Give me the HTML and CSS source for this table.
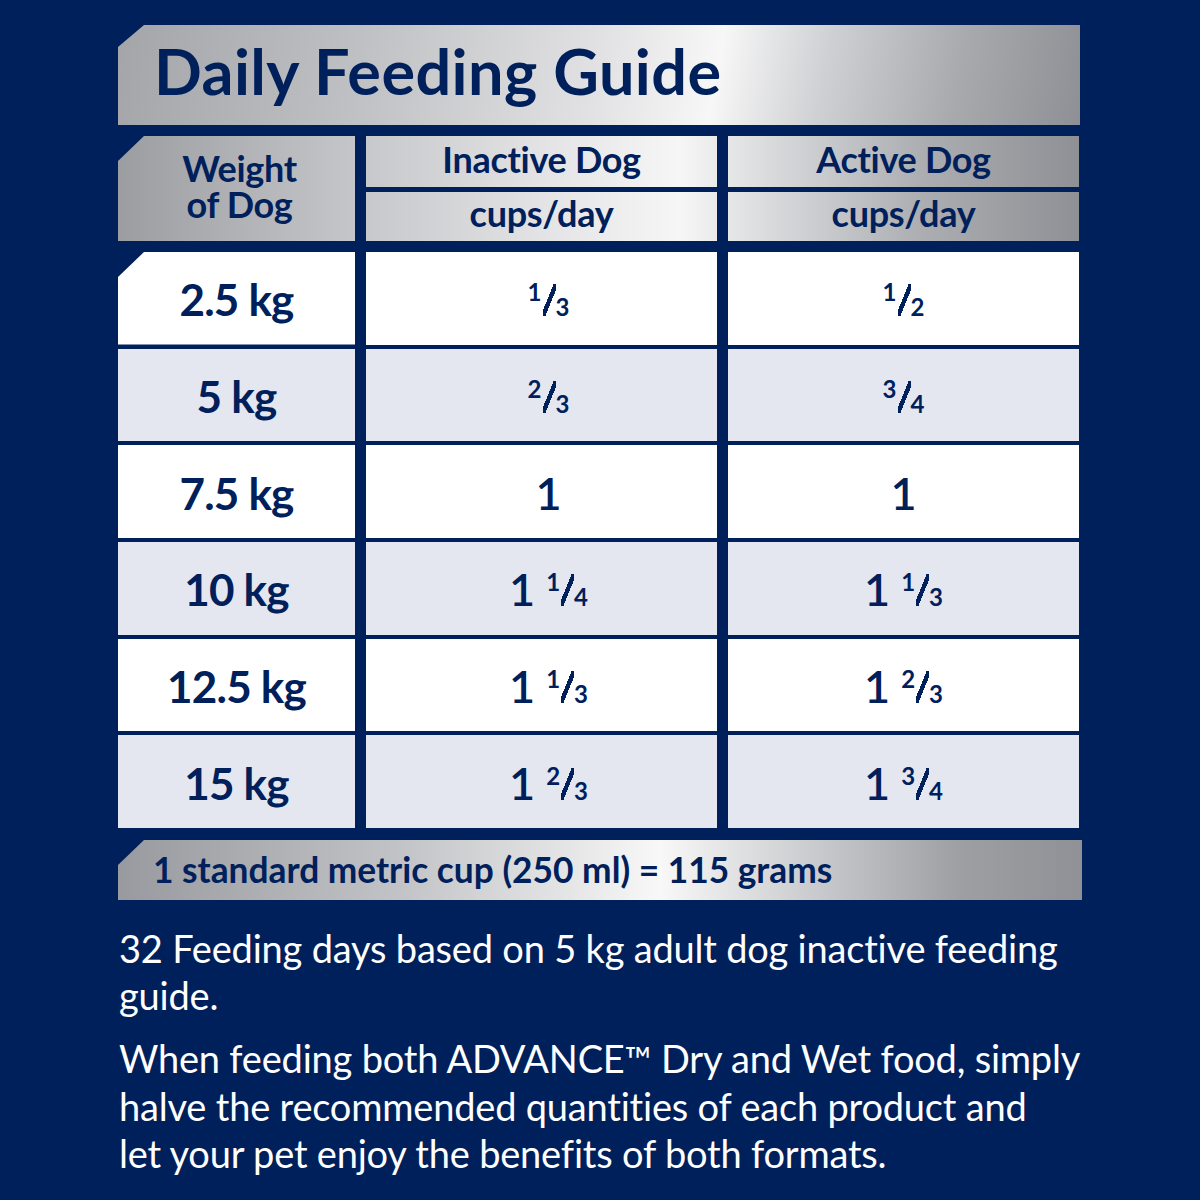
FILE: index.html
```html
<!DOCTYPE html>
<html lang="en">
<head>
<meta charset="utf-8">
<title>Daily Feeding Guide</title>
<link rel="stylesheet" href="styles.css">
</head>
<body>
<main class="page">
  <h1 class="title">Daily Feeding Guide</h1>

  <section class="thead">
    <div class="hcell hweight cut"><span class="hline">Weight</span><span class="hline">of Dog</span></div>
    <div class="hcell htop">Inactive Dog</div>
    <div class="hcell htop">Active Dog</div>
    <div class="hcell hsub">cups/day</div>
    <div class="hcell hsub">cups/day</div>
  </section>

  <section class="tbody">
    <div class="row">
      <div class="cell wcell cut">2.5 kg</div>
      <div class="cell vcell inactive"><span class="fr"><span class="num">1</span><span class="sl"></span><span class="den">3</span></span></div>
      <div class="cell vcell"><span class="fr"><span class="num">1</span><span class="sl"></span><span class="den">2</span></span></div>
    </div>
    <div class="row alt">
      <div class="cell wcell">5 kg</div>
      <div class="cell vcell inactive"><span class="fr"><span class="num">2</span><span class="sl"></span><span class="den">3</span></span></div>
      <div class="cell vcell"><span class="fr"><span class="num">3</span><span class="sl"></span><span class="den">4</span></span></div>
    </div>
    <div class="row">
      <div class="cell wcell">7.5 kg</div>
      <div class="cell vcell inactive">1</div>
      <div class="cell vcell">1</div>
    </div>
    <div class="row alt">
      <div class="cell wcell">10 kg</div>
      <div class="cell vcell inactive">1<span class="fr gap"><span class="num">1</span><span class="sl"></span><span class="den">4</span></span></div>
      <div class="cell vcell">1<span class="fr gap"><span class="num">1</span><span class="sl"></span><span class="den">3</span></span></div>
    </div>
    <div class="row">
      <div class="cell wcell">12.5 kg</div>
      <div class="cell vcell inactive">1<span class="fr gap"><span class="num">1</span><span class="sl"></span><span class="den">3</span></span></div>
      <div class="cell vcell">1<span class="fr gap"><span class="num">2</span><span class="sl"></span><span class="den">3</span></span></div>
    </div>
    <div class="row alt">
      <div class="cell wcell">15 kg</div>
      <div class="cell vcell inactive">1<span class="fr gap"><span class="num">2</span><span class="sl"></span><span class="den">3</span></span></div>
      <div class="cell vcell">1<span class="fr gap"><span class="num">3</span><span class="sl"></span><span class="den">4</span></span></div>
    </div>
  </section>

  <div class="foot cut">1 standard metric cup (250 ml) = 115 grams</div>

  <p class="note">32 Feeding days based on 5 kg adult dog inactive feeding<br>guide.</p>
  <p class="note second">When feeding both ADVANCE<span class="tm">™</span> Dry and Wet food, simply<br>halve the recommended quantities of each product and<br>let your pet enjoy the benefits of both formats.</p>
</main>
</body>
</html>
```
FILE: styles.css
```css
:root {
  --navy: #00205b;
  --row-alt: #e4e7ef;
}

html, body {
  margin: 0;
  padding: 0;
}

body {
  background: var(--navy);
  color: var(--navy);
  font-family: "Lato", "Liberation Sans", sans-serif;
  width: 1200px;
  height: 1200px;
  overflow: hidden;
}

.page {
  display: flex;
  flex-direction: column;
  padding: 25px 0 0 118px;
  width: 962px;
}

.cut {
  clip-path: polygon(26px 0, 100% 0, 100% 100%, 0 100%, 0 25px);
}

.title {
  margin: 0;
  height: 100px;
  box-sizing: border-box;
  display: flex;
  align-items: center;
  padding: 0 0 10px 36px;
  font-size: 63px;
  font-weight: 700;
  letter-spacing: 0.4px;
  clip-path: polygon(26px 0, 100% 0, 100% 100%, 0 100%, 0 22px);
  background: linear-gradient(100deg, #a4a5a9 0%, #bfc0c3 25%, #e2e2e4 50%, #f7f7f7 62%, #cfd0d3 73%, #a8a9ad 87%, #8f9095 100%);
}

.thead {
  margin-top: 11px;
  display: grid;
  grid-template-columns: 237px 351px 351px;
  grid-template-rows: 51px 49px;
  column-gap: 11px;
  row-gap: 5px;
}

.hcell {
  display: flex;
  align-items: center;
  justify-content: center;
  text-align: center;
  box-sizing: border-box;
  font-size: 36px;
  font-weight: 700;
  letter-spacing: -0.3px;
  background: linear-gradient(90deg, #9c9da1 118px, #c6c7ca 360px, #e6e6e8 560px, #f6f6f6 680px, #d6d7d9 780px, #adaeb2 920px, #8f9095 1080px) fixed;
}

.hcell:nth-child(2), .hcell:nth-child(4) { grid-column: 2; }
.hcell:nth-child(3), .hcell:nth-child(5) { grid-column: 3; }

.htop {
  padding-bottom: 5px;
}

.hsub {
  padding-bottom: 8px;
}

.hweight {
  grid-row: 1 / span 2;
  flex-direction: column;
  padding: 0 0 6px 6px;
}

.hline {
  display: block;
  line-height: 36px;
  height: 36px;
}

.tbody {
  margin-top: 11px;
  display: flex;
  flex-direction: column;
  gap: 4.2px;
}

.row {
  display: grid;
  grid-template-columns: 237px 351px 351px;
  column-gap: 11px;
  height: 92.5px;
}

.cell {
  background: #ffffff;
  display: flex;
  align-items: center;
  justify-content: center;
}

.row.alt .cell {
  background: var(--row-alt);
}

.wcell {
  font-size: 44px;
  font-weight: 700;
  letter-spacing: -0.8px;
  padding-top: 2px;
}

.vcell {
  font-size: 45px;
  font-weight: 600;
  padding-top: 2px;
}

.vcell.inactive {
  padding-left: 14px;
}

.fr {
  white-space: nowrap;
}

.fr.gap {
  margin-left: 11px;
}

.fr .num,
.fr .den {
  font-size: 24px;
  font-weight: 700;
}

.fr .num {
  vertical-align: 15px;
}

.fr .sl {
  display: inline-block;
  vertical-align: baseline;
  width: 13px;
  height: 32px;
  margin: 0 0 0 1px;
  background: linear-gradient(to bottom right,
    transparent calc(50% - 2.2px),
    var(--navy) calc(50% - 2.2px),
    var(--navy) calc(50% + 2.2px),
    transparent calc(50% + 2.2px));
}

.foot {
  margin-top: 12px;
  width: 964px;
  height: 60px;
  box-sizing: border-box;
  display: flex;
  align-items: center;
  padding-left: 35px;
  font-size: 35.3px;
  font-weight: 700;
  letter-spacing: 0;
  background: linear-gradient(90deg, #999a9f 118px, #c2c3c6 400px, #f8f8f8 660px, #c8c9cc 820px, #9e9fa3 960px, #909196 1082px) fixed;
}

.note {
  margin: 25px 0 0;
  color: #ffffff;
  font-size: 38px;
  line-height: 47px;
  letter-spacing: -0.2px;
  white-space: nowrap;
  padding-left: 1px;
}

.note.second {
  margin-top: 16px;
}

.tm {
  font-size: 0.95em;
}
```
